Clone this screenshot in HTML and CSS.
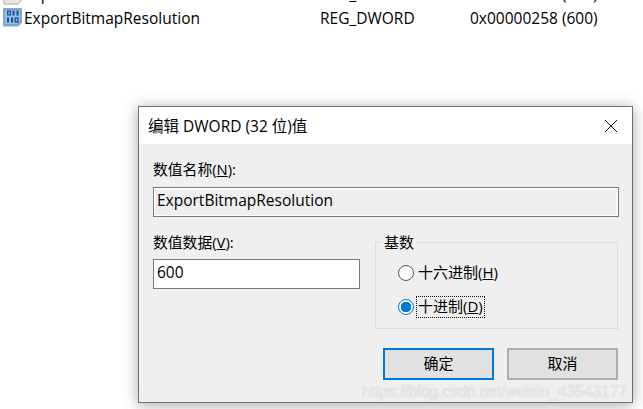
FILE: index.html
```html
<!DOCTYPE html>
<html lang="zh-CN">
<head>
<meta charset="utf-8">
<title>编辑 DWORD (32 位)值</title>
<link rel="stylesheet" href="styles.css">
</head>
<body>
<div class="list">
  <div class="row">
    <svg class="reg-icon" width="22" height="22" viewBox="0 0 22 22"><path d="M2 4h17v14l-3 3H2z" fill="#e6e6e6" stroke="#a8a8a8"/></svg>
    <span class="col-name">Export</span><span class="col-type">REG_SZ</span><span class="col-data">0x00000000 (000)</span>
  </div>
  <div class="row">
    <svg class="reg-icon" width="22" height="22" viewBox="0 0 22 22">
      <path d="M1.500 1.500h18v14l-3 3.500H1.500z" fill="#72a5dd" stroke="#8ea6c0"/>
      <path d="M3 3h15v11h-3v3H3z" fill="#93bdea"/>
      <path d="M5 3.500h4v5H5zM10.500 3.500h2v5h-2zM14.500 3.500h2v5h-2zM5 10.500h2v5H5zM9 10.500h2v5H9zM12.500 10.500h4v5h-4z" fill="#1b4f90"/>
      <path d="M6.300 4.800h1.400v2.400H6.300zM13.800 11.800h1.400v2.400h-1.400z" fill="#93bdea"/>
    </svg>
    <span class="col-name">ExportBitmapResolution</span><span class="col-type">REG_DWORD</span><span class="col-data">0x00000258 (600)</span>
  </div>
</div>
<section class="dialog">
  <header class="titlebar">
    <span class="title">编辑 DWORD (32 位)值</span>
    <svg class="close" width="12" height="12" viewBox="0 0 12 12"><path d="M0 0l12 12M12 0L0 12" stroke="#111" stroke-width="1" fill="none"/></svg>
  </header>
  <div class="body">
    <div class="label">数值名称(<u>N</u>):</div>
    <div class="field field-ro">ExportBitmapResolution</div>
    <div class="columns">
      <div class="col-left">
        <div class="label">数值数据(<u>V</u>):</div>
        <div class="field">600</div>
      </div>
      <fieldset class="group">
        <legend>基数</legend>
        <div class="radio"><span class="dot"></span><span class="radio-text">十六进制(<u>H</u>)</span></div>
        <div class="radio"><span class="dot dot-on"></span><span class="radio-text focus">十进制(<u>D</u>)</span></div>
      </fieldset>
    </div>
    <div class="buttons">
      <div class="btn btn-default">确定</div>
      <div class="btn">取消</div>
    </div>
  </div>
</section>
<div class="watermark">https://blog.csdn.net/weixin_43543177</div>
</body>
</html>
```
FILE: styles.css
```css
* { box-sizing: border-box; }
html, body { margin: 0; height: 100%; }
body {
  position: relative;
  width: 643px;
  height: 409px;
  overflow: hidden;
  background: #fff;
  color: #000;
  font-family: "Open Sans", "Noto Sans CJK SC", sans-serif;
  font-size: 15.5px;
}
.list { margin-top: -18px; padding-left: 2px; }
.row { display: flex; align-items: center; height: 24px; white-space: nowrap; }
.reg-icon { flex: none; width: 22px; height: 22px; }
.col-name { width: 296px; }
.col-type { width: 150px; }
.dialog {
  position: absolute;
  left: 138px;
  top: 106px;
  width: 495px;
  height: 297px;
  background: #efefef;
  border: 1px solid #707070;
  box-shadow: 0 2px 14px rgba(0, 0, 0, .35);
  display: flex;
  flex-direction: column;
}
.titlebar {
  height: 37px;
  flex: none;
  background: #fff;
  display: flex;
  align-items: center;
  justify-content: space-between;
  padding: 0 15px 0 9px;
}
.body { flex: 1; padding: 16px 13px 0 14px; }
.label { height: 20px; line-height: 18px; font-size: 14.8px; }
.field {
  height: 30px;
  line-height: 25px;
  margin-top: 7px;
  padding-left: 3px;
  background: #fff;
  border: 1px solid #7a7a7a;
}
.field-ro { background: #efefef; box-shadow: inset 0 0 0 1px #fff; }
.columns { display: flex; gap: 15px; margin-top: 16px; height: 95px; }
.col-left { width: 207px; }
.col-left .field { margin-top: 6px; }
.group {
  position: relative;
  width: 243px;
  height: 87px;
  margin: 9px 0 0;
  padding: 20px 0 0 22px;
  border: 1px solid #dcdcdc;
  min-inline-size: 0;
  font-size: 15px;
}
legend {
  position: absolute;
  top: -10px;
  left: 6px;
  padding: 0 2px;
  line-height: 18px;
  background: #efefef;
}
.radio { display: flex; align-items: center; gap: 4px; height: 20px; margin-bottom: 14px; }
.radio-text { line-height: 19px; padding-bottom: 1px; }
.dot {
  flex: none;
  width: 16px;
  height: 16px;
  border: 1px solid #555;
  border-radius: 50%;
  background: #fff;
}
.dot-on {
  border-color: #0078d7;
  background: radial-gradient(circle, #0078d7 0 5px, #fff 5.500px);
}
.focus { outline: 1px dotted #111; margin-left: -1px; padding: 0 1px 1px; }
.buttons { display: flex; justify-content: flex-end; gap: 13px; margin-top: 20px; padding-right: 1px; }
.btn {
  width: 111px;
  height: 32px;
  line-height: 27px;
  text-align: center;
  background: #e1e1e1;
  border: 2px solid #adadad;
  font-size: 15px;
}
.btn-default { border-color: #0078d7; }
.watermark {
  position: absolute;
  left: 362px;
  top: 383px;
  width: 271px;
  overflow: hidden;
  font-family: "Liberation Sans", sans-serif;
  font-size: 15.6px;
  white-space: nowrap;
  color: rgba(255, 255, 255, .65);
  text-shadow: 0 0 1px rgba(170, 170, 170, .8);
}
```
